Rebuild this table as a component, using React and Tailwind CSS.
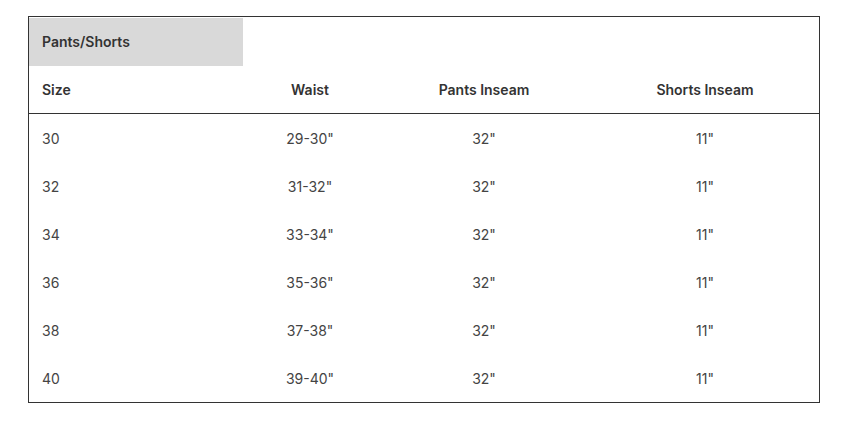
const rows = [
  ['30', '29-30"', '32"', '11"'],
  ['32', '31-32"', '32"', '11"'],
  ['34', '33-34"', '32"', '11"'],
  ['36', '35-36"', '32"', '11"'],
  ['38', '37-38"', '32"', '11"'],
  ['40', '39-40"', '32"', '11"'],
]

const cols = 'grid grid-cols-[214px_134px_214px_1fr] items-center'

export default function App() {
  return (
    <div className="bg-white w-[842px] h-[437px] pt-4 pl-7 font-['Inter','Liberation_Sans',sans-serif]">
      <div className="w-[792px] border border-[#333]">
        <div className="h-[49px] pt-[1px]">
          <div className="w-[214px] h-[48px] bg-[#d9d9d9] flex items-center pl-[13px] pb-[2px] text-[14px] font-semibold text-[#333]">
            Pants/Shorts
          </div>
        </div>
        <div className={`${cols} h-[48px] border-b border-[#333] text-[14px] font-semibold text-[#333]`}>
          <div className="pl-[13px]">Size</div>
          <div className="text-center">Waist</div>
          <div className="text-center">Pants Inseam</div>
          <div className="text-center">Shorts Inseam</div>
        </div>
        {rows.map((r) => (
          <div key={r[0]} className={`${cols} h-[48px] text-[14px] text-[#444]`}>
            <div className="pl-[13px]">{r[0]}</div>
            <div className="text-center">{r[1]}</div>
            <div className="text-center">{r[2]}</div>
            <div className="text-center">{r[3]}</div>
          </div>
        ))}
      </div>
    </div>
  )
}
